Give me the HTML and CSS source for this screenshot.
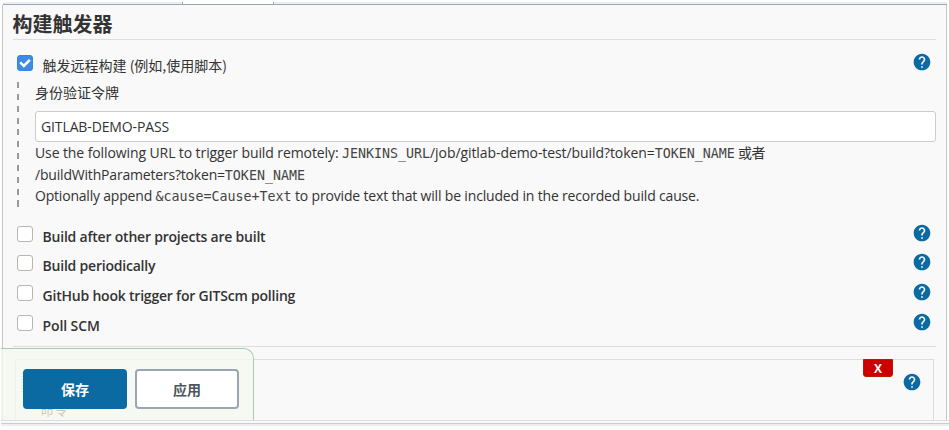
FILE: index.html
```
<!DOCTYPE html>
<html lang="zh-CN">
<head>
<meta charset="utf-8">
<title>构建触发器</title>
<link rel="stylesheet" href="styles.css">
</head>
<body>
<svg class="defs" width="0" height="0"><defs><symbol id="help" viewBox="0 0 24 24"><path fill="currentColor" d="M12 2C6.480 2 2 6.480 2 12s4.480 10 10 10 10-4.480 10-10S17.520 2 12 2zm1 17h-2v-2h2v2zm2.070-7.750l-.9.920C13.450 12.900 13 13.500 13 15h-2v-.5c0-1.100.45-2.100 1.170-2.830l1.240-1.260c.37-.36.590-.86.590-1.410 0-1.100-.9-2-2-2s-2 .9-2 2H8c0-2.210 1.790-4 4-4s4 1.790 4 4c0 .88-.36 1.680-.93 2.250z"/></symbol></defs></svg>
<div class="tabs"><div class="tab"></div></div>
<main class="panel">
  <h2 class="heading">构建触发器</h2>
  <div class="row first">
    <span class="check on"><svg viewBox="0 0 16 16"><path d="M2.500 7.300L6.700 11.300L13.500 4.500"/></svg></span>
    <label class="cn">触发远程构建 (例如,使用脚本)</label>
    <svg class="help"><use href="#help"/></svg>
  </div>
  <div class="nested">
    <div class="field-label">身份验证令牌</div>
    <input class="field" type="text" value="GITLAB-DEMO-PASS">
    <div class="note"><span class="t1">Use the following URL to trigger build remotely: </span><code>JENKINS_URL</code><span class="t2">/job/gitlab-demo-test/build?token=</span><code>TOKEN_NAME</code><span class="or"> 或者</span></div>
    <div class="note second"><span class="t3">/buildWithParameters?token=</span><code>TOKEN_NAME</code></div>
    <div class="note"><span class="t4">Optionally append </span><code>&amp;cause=Cause+Text</code><span class="t5"> to provide text that will be included in the recorded build cause.</span></div>
  </div>
  <div class="row r1"><span class="check"></span><label class="l1">Build after other projects are built</label><svg class="help"><use href="#help"/></svg></div>
  <div class="row r2"><span class="check"></span><label class="l2">Build periodically</label><svg class="help"><use href="#help"/></svg></div>
  <div class="row r3"><span class="check"></span><label class="l3">GitHub hook trigger for GITScm polling</label><svg class="help"><use href="#help"/></svg></div>
  <div class="row r4"><span class="check"></span><label class="l4">Poll SCM</label><svg class="help"><use href="#help"/></svg></div>
  <section class="step">
    <div class="grip"></div>
    <div class="command">命令</div>
    <button class="remove">X</button>
    <svg class="help"><use href="#help"/></svg>
  </section>
</main>
<div class="actions"><button class="save">保存</button><button class="apply">应用</button></div>
<footer class="bottom"></footer>
</body>
</html>
```
FILE: styles.css
```
* { box-sizing: border-box; }
body {
  margin: 0;
  width: 949px;
  height: 430px;
  overflow: hidden;
  position: relative;
  background: #fff;
  color: #333;
  font: 14px/21px "Noto Sans", "Noto Sans CJK SC", sans-serif;
}
.defs { position: absolute; }
.tabs {
  display: flex;
  align-items: flex-end;
  height: 5px;
  margin: 0 2px 0 3px;
  padding-left: 179px;
  background: linear-gradient(#fff 2px, #eaeff2 2px);
  border-bottom: 1px solid #9aa7b2;
}
.tab {
  width: 92px;
  height: 2px;
  border: solid #9aa7b2;
  border-width: 0 1px;
  background: #fff;
}
.panel {
  height: 415px;
  margin: 0 2px;
  padding: 0 10px;
  background: #f9f9f9;
  border: solid #c4c4c4;
  border-width: 0 1px;
  overflow: hidden;
}
.heading {
  height: 35px;
  margin: 0;
  border-bottom: 1px solid #ddd;
  font: bold 20px/37px "Noto Sans CJK SC", sans-serif;
  text-indent: -.5px;
}
.row {
  display: flex;
  align-items: flex-start;
  height: 30px;
  padding: 0 5px 0 4px;
}
.row label {
  margin: 0 auto 0 9.500px;
  font-family: "Open Sans", sans-serif;
  font-weight: 600;
  letter-spacing: -.21px;
  white-space: nowrap;
}
.row label.l4 { letter-spacing: -.1px; }
.row label.cn {
  margin-left: 9.500px;
  font-family: "Noto Sans CJK SC", sans-serif;
  font-weight: 400;
  letter-spacing: 0;
}
.first { height: 26px; margin-top: 15px; }
.check {
  width: 16px;
  height: 16px;
  flex: none;
  border: 1px solid #bab5b0;
  border-radius: 3px;
  background: #fff;
}
.check.on { border-color: #3584e4; background: #3f8ae5; }
.check svg { display: block; width: 14px; height: 14px; }
.check path { fill: none; stroke: #fff; stroke-width: 3; }
.help { width: 20px; height: 20px; margin: -3px -1px 0 0; flex: none; color: #0b6aa2; }
.nested {
  height: 126px;
  margin: 1px 0 18px 4px;
  padding-left: 18px;
  background: repeating-linear-gradient(#999 0 6px, transparent 6px 11.850px) left / 2px 100% no-repeat;
}
.field-label { height: 29px; line-height: 21px; font-family: "Noto Sans CJK SC", sans-serif; }
.field {
  display: block;
  width: 901px;
  height: 31px;
  padding: 1px 5px;
  border: 1px solid #ccc;
  border-radius: 3px;
  background: #fff;
  color: #333;
  font: 14px "Open Sans", sans-serif;
  letter-spacing: -.12px;
}
.note { height: 22px; white-space: pre; font-family: "Open Sans", "Noto Sans CJK SC", sans-serif; }
.second { height: 21px; line-height: 21px; }
.t1 { letter-spacing: -.1px; }
.t2 { letter-spacing: -.08px; }
.t3 { letter-spacing: -.19px; }
.t4 { letter-spacing: -.2px; }
.t5 { letter-spacing: -.17px; }
.or { letter-spacing: -.4px; }
code { font: 13.300px/1 "DejaVu Sans Mono", monospace; color: #444; }
.r1 { height: 29px; }
.r4 { height: 32px; border-bottom: 1px solid #ddd; }
.step {
  display: flex;
  width: 919px;
  height: 80px;
  margin: 12px 0 0 2px;
  border: 1px solid #ddd;
}
.grip {
  width: 14px;
  height: 21px;
  margin: 13px 0 0 5px;
  background: repeating-linear-gradient(#999 0 1px, transparent 1px 3px);
}
.command { margin: 39px auto 0 5px; color: #111; font-family: "Noto Sans CJK SC", sans-serif; }
.remove {
  width: 30px;
  height: 18px;
  margin: -1px 9px 0 0;
  padding: 0;
  background: #c00;
  border: 1px solid #b81c00;
  border-radius: 0 0 3px 3px;
  color: #fff;
  font: bold 12px/15px "Open Sans", sans-serif;
}
.step .help { margin: 12px 11px 0 0; }
.actions {
  position: absolute;
  left: 1px;
  top: 348px;
  width: 253px;
  height: 72px;
  display: flex;
  gap: 8px;
  padding: 20px 0 0 22px;
  border: solid #a9cbb6;
  border-width: 1px 1px 0 0;
  border-radius: 0 10px 0 0;
  background: rgba(244, 249, 240, .8);
}
.actions button {
  width: 104px;
  height: 40px;
  padding: 0;
  border: 2px solid #9aa7b2;
  border-radius: 4px;
  background: #fff;
  color: #4d545d;
  font: bold 14px "Noto Sans CJK SC", sans-serif;
}
.actions .save { background: #0b6aa2; border-color: #0b6aa2; color: #fff; }
.bottom {
  height: 6px;
  margin-left: 1px;
  background: linear-gradient(#ddd 1px, #f9f9f9 1px 3px, #ccc 3px 4px, #eee 4px);
}
```
